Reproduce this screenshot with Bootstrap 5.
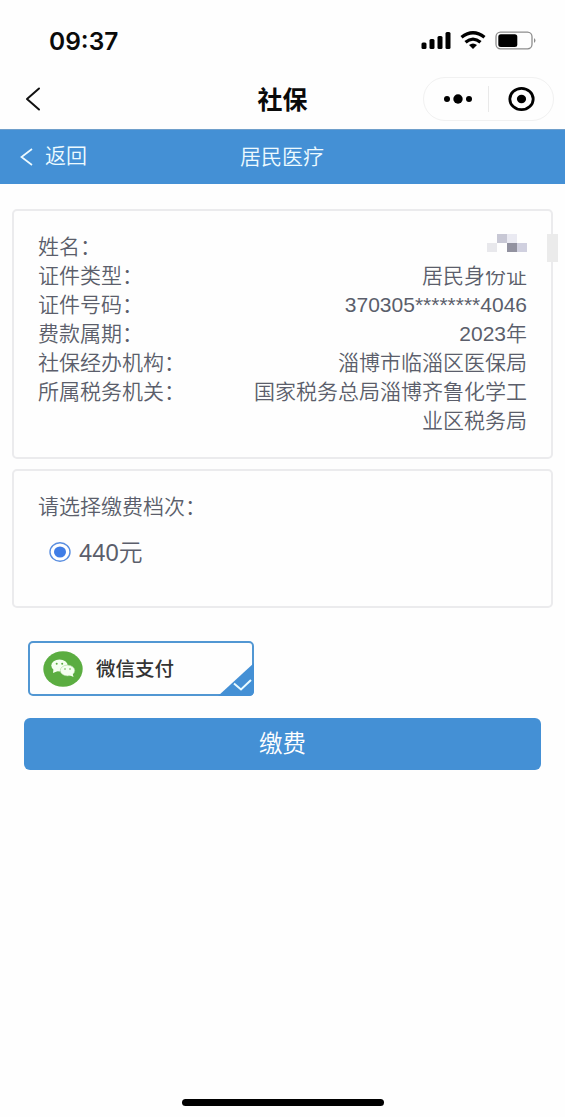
<!DOCTYPE html>
<html lang="zh-CN">
<head>
<meta charset="utf-8">
<meta name="viewport" content="width=device-width, initial-scale=1">
<title>社保</title>
<link href="https://cdn.jsdelivr.net/npm/bootstrap@5.3.0/dist/css/bootstrap.min.css" rel="stylesheet">
<style>
  body { font-family: "Liberation Sans", "Noto Sans CJK SC", sans-serif; font-weight: 350; font-size: 21px; line-height: 29px; color: #5b5e6b; background: #fefefe; height: 1117px; overflow: hidden; }
  .status-bar { height: 70px; padding: 12px 28px 0 49px; }
  .clock { font: 600 24.5px/30px Inter, sans-serif; color: #0a0a0a; margin-top: 14px; }
  .title-bar { height: 59px; padding: 0 11px 2px; }
  .app-title { font-size: 25px; font-weight: 600; color: #0a0a0a; line-height: 36px; padding-top: 2px; }
  .side { flex: 1 1 0; }
  .capsule { width: 131px; height: 44px; border: 1px solid #f1f1f1; }
  .capsule-line { width: 1px; height: 26px; background: #e9e9e9; }
  .blue-bar { height: 55px; background: #4490d5; border-top: 1px solid #6f9fcb; padding: 0 0 1px 20px; color: #edfaff; }
  .info-card { border: 2px solid #ebebed; border-radius: 5px; background: #fefefe; padding: 21px 24px 0; color: inherit; }
  .info-one { height: 250px; }
  .info-two { height: 139px; }
  .val { width: 275px; text-align: right; }
  .mosaic { right: 24px; top: 23px; z-index: 1; }
  .smudge { right: -7px; top: 23px; width: 11px; height: 28px; background: #ebebeb; }
  .amount { font-size: 23.8px; }
  .pay-box { width: 226px; height: 55px; border: 2px solid #5297d3; border-radius: 5px; margin: 33px 0 0 28px; padding-left: 13px; }
  .pay-name { font-size: 19.5px; font-weight: 500; color: #333; margin-left: 13px; padding-top: 2px; }
  .pay-check { right: -2px; bottom: -2px; }
  .pay-btn { height: 52px; margin: 22px 24px 0; border-radius: 6px; background: #4490d5; color: #fff; border: 0; font-size: 23.5px; font-weight: 350; line-height: 51px; padding: 1px 0 0; }
  .home-line { width: 202px; height: 7px; background: #000; margin-bottom: 11px; }
</style>
</head>
<body class="d-flex flex-column">
  <header>
    <div class="status-bar d-flex justify-content-between align-items-start">
      <span class="clock">09:37</span>
      <svg width="118" height="22" viewBox="0 0 118 22" style="margin-top:18px">
        <g transform="translate(1.5 0)">
          <rect x="1" y="12.500" width="5" height="6.500" rx="1.500"/><rect x="9" y="9" width="5" height="10" rx="1.500"/><rect x="17" y="6" width="5" height="13" rx="1.500"/><rect x="25" y="2" width="5" height="17" rx="1.500"/>
          <g fill="none" stroke="#000" stroke-width="3.300"><path d="M41 7.300Q52.500-1.800 64 7.300"/><path d="M45 12.200Q52.500 6 60 12.200"/></g>
          <path d="M48.500 15Q52.500 12 56.500 15L52.500 19Z"/>
          <rect x="75.500" y="2.200" width="36" height="16.600" rx="4.500" fill="none" stroke="#8d8d8d" stroke-width="1.300"/>
          <rect x="77.800" y="4.200" width="19" height="12.800" rx="2.500"/>
          <path d="M113.500 8Q116.500 10.500 113.500 13Z" fill="#8d8d8d"/>
        </g>
      </svg>
    </div>
    <div class="title-bar d-flex align-items-center">
      <div class="side d-flex"><svg width="16" height="24" viewBox="0 0 16 24" fill="none" stroke="#111" stroke-width="2" stroke-linecap="round" stroke-linejoin="round" style="margin-left:14px"><path d="M14 1.500L2 12L14 22.500"/></svg></div>
      <div class="app-title">社保</div>
      <div class="side d-flex justify-content-end">
        <div class="capsule rounded-pill d-flex align-items-center">
          <svg width="64" height="26" viewBox="0 0 64 26"><circle cx="23" cy="13" r="3"/><circle cx="34" cy="13" r="4.700"/><circle cx="45" cy="13" r="3"/></svg>
          <span class="capsule-line"></span>
          <svg width="64" height="28" viewBox="0 0 64 28"><ellipse cx="32.500" cy="14" rx="11.700" ry="10.700" fill="none" stroke="#000" stroke-width="2.800"/><ellipse cx="32.500" cy="14" rx="4.600" ry="4.200"/></svg>
        </div>
      </div>
    </div>
    <nav class="blue-bar d-flex align-items-center">
      <div class="d-flex align-items-center" style="width:220px">
        <svg width="13" height="18" viewBox="0 0 13 18" fill="none" stroke="#edfaff" stroke-width="1.700"><path d="M12 1L1.500 9L12 17"/></svg>
        <span style="margin-left:12px;margin-top:-2px">返回</span>
      </div>
      <span>居民医疗</span>
    </nav>
  </header>

  <main style="padding:25px 12px 0">
    <section class="card info-card info-one">
      <div class="d-flex justify-content-between"><span>姓名：</span></div>
      <svg class="mosaic position-absolute" width="40" height="37" viewBox="0 0 40 37" shape-rendering="crispEdges">
        <rect width="40" height="37" fill="#fefefe"/>
        <rect x="10" width="10" height="9" fill="#c8c8d5"/><rect x="20" width="10" height="9" fill="#eaeaf2"/>
        <rect y="9" width="10" height="9" fill="#e8e8ec"/><rect x="20" y="9" width="10" height="9" fill="#9292a0"/><rect x="30" y="9" width="10" height="9" fill="#d0d0df"/>
      </svg>
      <span class="smudge position-absolute"></span>
      <div class="d-flex justify-content-between"><span>证件类型：</span><span class="val">居民身份证</span></div>
      <div class="d-flex justify-content-between"><span>证件号码：</span><span class="val">370305********4046</span></div>
      <div class="d-flex justify-content-between"><span>费款属期：</span><span class="val">2023年</span></div>
      <div class="d-flex justify-content-between"><span>社保经办机构：</span><span class="val">淄博市临淄区医保局</span></div>
      <div class="d-flex justify-content-between"><span>所属税务机关：</span><span class="val">国家税务总局淄博齐鲁化学工业区税务局</span></div>
    </section>
    <section class="card info-card info-two" style="margin-top:10px">
      <div>请选择缴费档次：</div>
      <label class="d-flex align-items-center" style="margin:16px 0 0 11px">
        <svg width="22" height="22" viewBox="0 0 22 22"><ellipse cx="11" cy="11" rx="10" ry="9.200" fill="#fff" stroke="#5a8ee0" stroke-width="1.400"/><ellipse cx="11" cy="11" rx="6" ry="5.600" fill="#3f7de6"/></svg>
        <span class="amount" style="margin-left:8px;padding-top:1px">440元</span>
      </label>
    </section>
  </main>

  <div class="pay-box position-relative d-flex align-items-center">
    <svg width="40" height="36" viewBox="0 0 40 36">
      <ellipse cx="20" cy="18" rx="19.700" ry="17.800" fill="#5bad41"/>
      <g fill="#f5fff0"><ellipse cx="16.500" cy="14.500" rx="8.200" ry="5.900"/><path d="M10.500 18L10 22L15 20Z"/></g>
      <ellipse cx="24.500" cy="19.500" rx="7.200" ry="5.400" fill="#f5fff0" stroke="#a9d69a" stroke-width=".6"/><path d="M26 24L30.500 26L29.500 22Z" fill="#f5fff0"/>
      <g fill="#5bad41"><circle cx="13.700" cy="12.700" r="1"/><circle cx="19.200" cy="12.700" r="1"/><circle cx="22" cy="18" r=".8"/><circle cx="27" cy="18" r=".8"/></g>
    </svg>
    <span class="pay-name">微信支付</span>
    <svg class="pay-check position-absolute" width="36" height="33" viewBox="0 0 36 33"><path d="M0 33L36 0V28Q36 33 31 33Z" fill="#4490d5"/><path d="M16 20.500L23 26.500L33 17" fill="none" stroke="#e9fbff" stroke-width="2"/></svg>
  </div>
  <button class="btn pay-btn" type="button">缴费</button>
  <div class="home-line rounded-pill mx-auto mt-auto"></div>
<script src="https://cdn.jsdelivr.net/npm/bootstrap@5.3.0/dist/js/bootstrap.bundle.min.js"></script>
</body>
</html>
